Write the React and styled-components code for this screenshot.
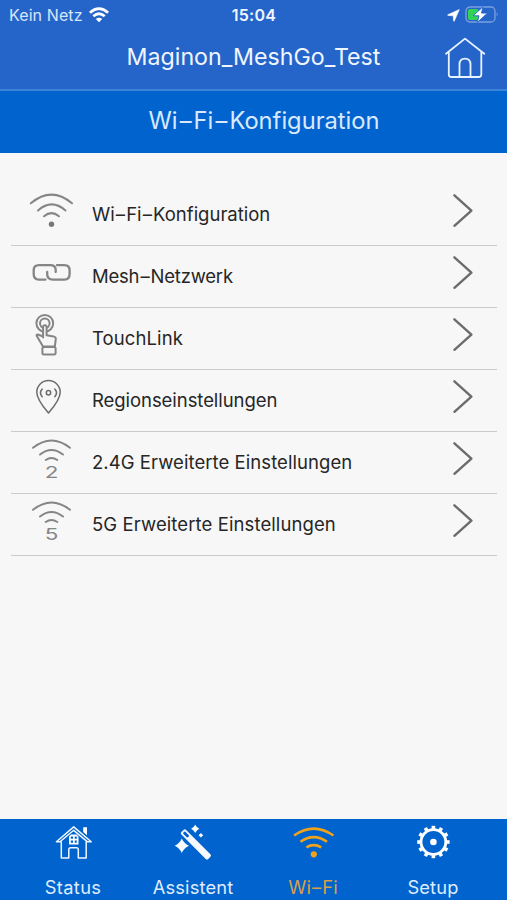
import React from "react";
import styled, { createGlobalStyle } from "styled-components";

const GlobalStyle = createGlobalStyle`
  * { box-sizing: border-box; }
  body { margin: 0; background: #f7f7f7; }
`;

const Screen = styled.div`
  display: flex;
  flex-direction: column;
  width: 100%;
  height: 900px;
  overflow: hidden;
  background: #f7f7f7;
  font-family: Inter, "Liberation Sans", sans-serif;
`;

const Header = styled.header`
  height: 91px;
  background: #2565c9;
  border-bottom: 2px solid #3c84da;
  color: #f0f6ff;
`;

const StatusBar = styled.div`
  display: grid;
  grid-template-columns: 1fr auto 1fr;
  align-items: center;
  height: 30px;
  padding: 0 8px 0 9px;
`;

const Carrier = styled.div`
  display: flex;
  align-items: center;
  gap: 6px;
  font-size: 16px;
  letter-spacing: 0.1px;
  color: #d8e5fa;
`;

const Clock = styled.div`
  font-size: 16px;
  font-weight: 600;
  letter-spacing: 0.3px;
`;

const Indicators = styled.div`
  display: flex;
  justify-content: flex-end;
  align-items: center;
  gap: 5px;
`;

const TitleBar = styled.div`
  display: grid;
  grid-template-columns: 62px 1fr 62px;
  height: 54px;
  padding: 0 4px;
`;

const Title = styled.h1`
  margin: 0;
  font-size: 23.2px;
  font-weight: 400;
  line-height: 55px;
  text-align: center;
  white-space: nowrap;
`;

const PageHeading = styled.h2`
  flex: none;
  height: 62px;
  margin: 0;
  background: #0164ce;
  color: #d9e9ff;
  font-size: 23.7px;
  font-weight: 400;
  line-height: 60px;
  text-align: center;
  padding-left: 21px;
`;

const Dash = styled.span`
  margin: 0 ${(p) => p.$gap}em;
`;

const Menu = styled.ul`
  flex: 1;
  margin: 0;
  padding: 31px 10px 0 11px;
  list-style: none;
`;

const MenuRow = styled.li`
  display: flex;
  height: 62px;
  padding: 0 21px 0 9px;
  border-bottom: 1px solid #cbcbcb;
`;

const RowLabel = styled.span`
  flex: 1;
  padding-left: 11px;
  color: #262626;
  font-size: 18.5px;
  line-height: 60px;
  letter-spacing: ${(p) => p.$spacing}px;
  white-space: nowrap;
`;

const Icon = styled.svg`
  display: block;
  flex: none;
  overflow: visible;
`;

const LineIcon = styled(Icon)`
  fill: none;
  stroke: ${(p) => p.$color || "#858585"};
  stroke-width: ${(p) => p.$weight || 2};
  stroke-linecap: round;
  stroke-linejoin: round;
`;

const BandDigit = styled.text`
  fill: #858585;
  stroke: none;
  font-size: 16.5px;
  font-family: Inter, sans-serif;
`;

const TabBar = styled.nav`
  display: grid;
  grid-template-columns: repeat(4, 120px);
  flex: none;
  height: 81px;
  padding: 1px 0 0 13px;
  background: #0164ce;
`;

const Tab = styled.div`
  display: flex;
  flex-direction: column;
  align-items: center;
  color: ${(p) => (p.$active ? "#d7a046" : "#dfecff")};
`;

const TabLabel = styled.span`
  margin-top: 6px;
  font-size: 18.3px;
  line-height: 42px;
  letter-spacing: ${(p) => p.$spacing}px;
`;

const WifiIcon = () => (
  <LineIcon width="61" height="61" viewBox="0 0 61 61">
    <path d="M10.8 19.3Q31.5 1.9 52 19.3M18 26.5Q31.7 14.3 45.5 26.5M24 32.3Q31.5 26 39 32.3" />
    <circle cx="31.5" cy="40.3" r="2.7" fill="#777" stroke="none" />
  </LineIcon>
);

const LinkIcon = () => (
  <LineIcon width="61" height="61" viewBox="0 0 61 61" $weight={2.3}>
    <path d="M25.5 33.6H19Q13.7 33.6 13.7 28.3V24.5Q13.7 19.2 19 19.2H30.2Q35.7 19.2 35.7 24V26" />
    <path d="M37 19.2H44.3Q49.6 19.2 49.6 24.5V28.3Q49.6 33.6 44.3 33.6H33Q27.2 33.6 27.2 28V26" />
  </LineIcon>
);

const TouchIcon = () => (
  <LineIcon width="61" height="61" viewBox="0 0 61 61" $weight={2}>
    <circle cx="24.8" cy="15.3" r="8.4" />
    <circle cx="24.8" cy="15.3" r="4.8" />
    <path fill="#f7f7f7" d="M23.1 29.5V19Q23.1 17.2 24.9 17.2T26.6 19V27.3L33.5 28.4Q35.9 29 35.8 31L34.8 38.5H23L16.8 28Q16 26.2 17.8 26.5L23.1 28.5" />
    <rect x="22.4" y="39" width="13.2" height="7.4" rx="1.5" />
  </LineIcon>
);

const PinIcon = () => (
  <LineIcon width="61" height="61" viewBox="0 0 61 61" $weight={1.5} $color="#6d6d6d">
    <path d="M28.5 43Q16.8 29.5 16.8 22.2A11.7 11.7 0 0 1 40.2 22.2Q40.2 29.5 28.5 43Z" />
    <circle cx="28.5" cy="22.8" r="2.2" />
    <path d="M22.2 19Q18.8 22.8 22.2 26.8M34.8 19Q38.2 22.8 34.8 26.8" />
  </LineIcon>
);

const BandIcon = ({ digit }) => (
  <LineIcon width="61" height="61" viewBox="0 0 61 61" $weight={1.9}>
    <path d="M13 15.8Q31.5 1.2 50 15.8M20 22.6Q31.5 13.2 43 22.6M25.7 28Q31.5 24 37.3 28" />
    <BandDigit transform="translate(31.5 45.6) scale(1.36 1)" textAnchor="middle">
      {digit}
    </BandDigit>
  </LineIcon>
);

const Band24Icon = () => <BandIcon digit="2" />;
const Band5Icon = () => <BandIcon digit="5" />;

const Chevron = () => (
  <LineIcon width="24" height="61" viewBox="0 0 24 61" $weight={2.4} $color="#6c6c6c">
    <path d="M2.4 11.3L19.4 26.6L2.4 41.8" />
  </LineIcon>
);

const StatusWifi = () => (
  <LineIcon width="20" height="16" viewBox="0 0 20 16" $color="#fff" $weight={2.8}>
    <path strokeLinecap="butt" d="M.9 5.7Q10 -2.4 19.1 5.7M4.3 9.3Q10 4.3 15.7 9.3" />
    <path fill="#fff" stroke="none" d="M6.8 12Q10 9.3 13.2 12L10 15.2Z" />
  </LineIcon>
);

const LocationArrow = () => (
  <Icon width="13" height="13" viewBox="0 0 13 13" fill="#fff" stroke="#fff" strokeWidth=".6" strokeLinejoin="round">
    <path d="M12.3.6L.8 5.7Q.4 6.3 1.2 6.4L6.2 6.8L6.6 12Q6.8 12.6 7.3 12Z" />
  </Icon>
);

const Battery = () => (
  <Icon width="34" height="18" viewBox="0 0 34 18">
    <rect x="1" y="1" width="29" height="15" rx="4" fill="none" stroke="#7b9fdf" strokeWidth="1.3" />
    <rect x="3" y="3" width="10.5" height="11" rx="2" fill="#32d158" />
    <path d="M31.7 6.2Q33.7 8.4 31.7 10.7Z" fill="#7b9fdf" />
    <path d="M18 .8L8 9.8H14L12.3 16.5L22.5 7.1H16.5Z" fill="#fff" stroke="#2565c9" strokeWidth=".9" />
  </Icon>
);

const HomeIcon = () => (
  <LineIcon width="62" height="54" viewBox="0 0 62 54" $color="#e9f2ff" $weight={1.8}>
    <path d="M5 23.8L24 8.6L43.3 23.8M7.8 22V44.5Q7.8 47 10.3 47H37.8Q40.3 47 40.3 44.5V22M18.5 47V34.5Q18.5 28.7 24 28.7T29.5 34.5V47" />
  </LineIcon>
);

const HouseIcon = () => (
  <LineIcon width="60" height="40" viewBox="0 0 60 40" $color="#eef6ff" $weight={1.5}>
    <path d="M13.4 21.8L30.7 6.9L48.2 21.8H44.5L30.7 10.3L17 21.8ZM18.3 22V37.9H25.8V29.5Q25.8 27.7 27.6 27.7H33.5Q35.3 27.7 35.3 29.5V37.9H43.2V22" />
    <path fill="#fff" stroke="none" d="M40.2 7.2H44V15.2L40.2 12Z" />
    <path fill="#fff" stroke="none" fillRule="evenodd" d="M26 24.4V16.5L28 14.5H33.5L35.5 16.5V24.4ZM27.8 16.6V18.7H30V16.6ZM31.7 16.6V18.7H33.8V16.6ZM27.8 20.4V22.7H30V20.4ZM31.7 20.4V22.7H33.8V20.4Z" />
  </LineIcon>
);

const WandIcon = () => (
  <Icon width="60" height="40" viewBox="0 0 60 40" fill="#f6faff">
    <path d="M18.8 18.5Q21 23.5 26 25.7Q21 27.9 18.8 33Q16.6 27.9 11.7 25.7Q16.6 23.5 18.8 18.5ZM32.2 4.8Q33.6 7.4 36.3 8.8Q33.6 10.2 32.2 13Q30.8 10.2 28.1 8.8Q30.8 7.4 32.2 4.8ZM37.9 13L40.2 15.3L37.9 17.6L35.6 15.3Z" />
    <rect x="18.5" y="10" width="38" height="6.6" rx="1.8" transform="rotate(45 21.8 13.3)" />
    <rect x="20.2" y="11.8" width="6.7" height="3" rx="1.2" fill="#0164ce" transform="rotate(45 21.8 13.3)" />
  </Icon>
);

const WifiTabIcon = () => (
  <LineIcon width="60" height="40" viewBox="0 0 60 40" $color="#f0a21c" $weight={2.6}>
    <path strokeLinecap="butt" d="M11.1 15.5Q30.8 1.8 50.4 15.5M17.5 21.7Q30.8 12.5 44 21.7M23.4 27.3Q30.8 22.9 38.2 27.3" />
    <circle cx="30.8" cy="34.3" r="3.1" fill="#f0a21c" stroke="none" />
  </LineIcon>
);

const GearIcon = () => (
  <LineIcon width="60" height="40" viewBox="0 0 60 40" $color="#fff" $weight={2.8}>
    <circle cx="30.4" cy="22" r="12.4" />
    {Array.from({ length: 12 }, (_, i) => (
      <path
        key={i}
        strokeLinecap="butt"
        strokeWidth="3.6"
        d="M30.4 9.8V5.8"
        transform={`rotate(${i * 30} 30.4 22)`}
      />
    ))}
    <circle cx="30.4" cy="22" r="3.3" fill="#fff" stroke="none" />
  </LineIcon>
);

const Dashed = ({ text, gap }) =>
  text.split("–").map((part, i) => (
    <React.Fragment key={i}>
      {i > 0 && <Dash $gap={gap}>–</Dash>}
      {part}
    </React.Fragment>
  ));

const rows = [
  { label: "Wi–Fi–Konfiguration", Glyph: WifiIcon, spacing: 0 },
  { label: "Mesh–Netzwerk", Glyph: LinkIcon, spacing: -0.22 },
  { label: "TouchLink", Glyph: TouchIcon, spacing: 0.1 },
  { label: "Regionseinstellungen", Glyph: PinIcon, spacing: -0.06 },
  { label: "2.4G Erweiterte Einstellungen", Glyph: Band24Icon, spacing: 0.06 },
  { label: "5G Erweiterte Einstellungen", Glyph: Band5Icon, spacing: 0.1 },
];

const tabs = [
  { label: "Status", Glyph: HouseIcon, spacing: 0.35 },
  { label: "Assistent", Glyph: WandIcon, spacing: 0.15 },
  { label: "Wi–Fi", Glyph: WifiTabIcon, spacing: 0.2, active: true },
  { label: "Setup", Glyph: GearIcon, spacing: 0.15 },
];

export default function App() {
  return (
    <Screen>
      <GlobalStyle />
      <Header>
        <StatusBar>
          <Carrier>
            Kein Netz
            <StatusWifi />
          </Carrier>
          <Clock>15:04</Clock>
          <Indicators>
            <LocationArrow />
            <Battery />
          </Indicators>
        </StatusBar>
        <TitleBar>
          <span />
          <Title>Maginon_MeshGo_Test</Title>
          <HomeIcon />
        </TitleBar>
      </Header>
      <PageHeading>
        <Dashed text="Wi–Fi–Konfiguration" gap={0.09} />
      </PageHeading>
      <Menu>
        {rows.map(({ label, Glyph, spacing }) => (
          <MenuRow key={label}>
            <Glyph />
            <RowLabel $spacing={spacing}>
              <Dashed text={label} gap={0.06} />
            </RowLabel>
            <Chevron />
          </MenuRow>
        ))}
      </Menu>
      <TabBar>
        {tabs.map(({ label, Glyph, spacing, active }) => (
          <Tab key={label} $active={active}>
            <Glyph />
            <TabLabel $spacing={spacing}>
              <Dashed text={label} gap={0.05} />
            </TabLabel>
          </Tab>
        ))}
      </TabBar>
    </Screen>
  );
}
